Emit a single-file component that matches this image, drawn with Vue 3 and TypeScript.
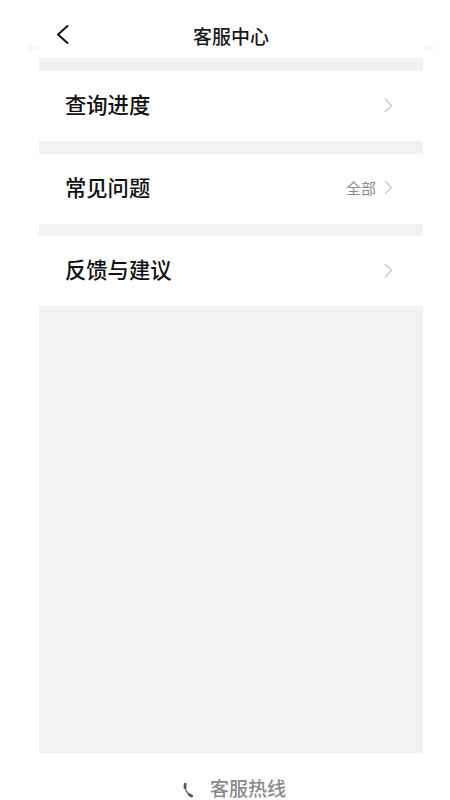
<script setup lang="ts">
interface Row { label: string; extra?: string }
const rows: Row[] = [
  { label: '查询进度' },
  { label: '常见问题', extra: '全部' },
  { label: '反馈与建议' },
]
</script>

<template>
  <div class="page">
    <header class="bar">
      <svg class="back" width="14" height="20" viewBox="0 0 14 20" fill="none">
        <path d="M11.5 1 L2 9.5 L11.5 18" stroke="#111" stroke-width="2" stroke-linecap="round" stroke-linejoin="round" />
      </svg>
      <h1 class="title">客服中心</h1>
    </header>
    <main class="panel">
      <div v-for="row in rows" :key="row.label" class="row">
        <span class="label">{{ row.label }}</span>
        <span class="side">
          <span v-if="row.extra" class="extra">{{ row.extra }}</span>
          <svg class="chev" width="9" height="15" viewBox="0 0 9 15" fill="none">
            <path d="M1 1 L7.5 7.5 L1 14" stroke="#c4c4c6" stroke-width="1.1" />
          </svg>
        </span>
      </div>
    </main>
    <footer class="foot">
      <svg class="phone" width="10" height="15" viewBox="0 0 10 15" fill="none">
        <path d="M2.2 1.2 C1.4 5 3 10 8.6 13" stroke="#6d6d72" stroke-width="1.6" stroke-linecap="round" />
        <path d="M2.2 1.2 L2 4.6 M6.2 11.6 L8.6 13" stroke="#55555a" stroke-width="2.8" stroke-linecap="round" />
      </svg>
      <span class="hotline">客服热线</span>
    </footer>
  </div>
</template>

<style>
html, body { margin: 0; background: #fff; }
</style>

<style scoped>
.page {
  width: 450px;
  height: 800px;
  display: flex;
  flex-direction: column;
  background: #fff;
  font-family: "Noto Sans CJK SC", "Noto Sans", sans-serif;
}
.bar {
  height: 58px;
  flex: none;
  position: relative;
  display: flex;
  align-items: center;
  justify-content: center;
  padding-top: 14px;
  padding-left: 12px;
  box-sizing: border-box;
}
.bar::before,
.bar::after {
  content: "";
  position: absolute;
  top: 46px;
  width: 11px;
  height: 4px;
  background: #f6f6f6;
}
.bar::before { left: 28px; }
.bar::after { left: 423px; }
.back {
  position: absolute;
  left: 56px;
  top: 25px;
}
.title {
  margin: 0;
  font-size: 19px;
  font-weight: 500;
  color: #1a1a1a;
  line-height: 26px;
}
.panel {
  height: 695px;
  flex: none;
  box-sizing: border-box;
  margin: 0 27px 0 39px;
  background: #f2f2f4;
  padding-top: 13px;
  display: flex;
  flex-direction: column;
  gap: 12.5px;
}
.row {
  height: 70px;
  flex: none;
  background: #fff;
  display: flex;
  align-items: center;
  justify-content: space-between;
  padding: 0 30px 0 26px;
}
.label {
  font-size: 21.3px;
  font-weight: 500;
  color: #111;
  padding-bottom: 5px;
}
.side {
  display: flex;
  align-items: center;
  gap: 8px;
}
.chev {
  margin-bottom: 2px;
}
.extra {
  font-size: 15px;
  color: #8c8c8e;
  padding-bottom: 3px;
}
.foot {
  height: 47px;
  flex: none;
  display: flex;
  align-items: flex-start;
  justify-content: center;
  gap: 17px;
  padding-top: 26px;
  padding-left: 19px;
  box-sizing: border-box;
}
.phone {
  margin-top: 4px;
}
.hotline {
  display: block;
  font-size: 19px;
  font-weight: 500;
  color: #8a8a8e;
  line-height: 20px;
  margin-top: -1px;
}
</style>
